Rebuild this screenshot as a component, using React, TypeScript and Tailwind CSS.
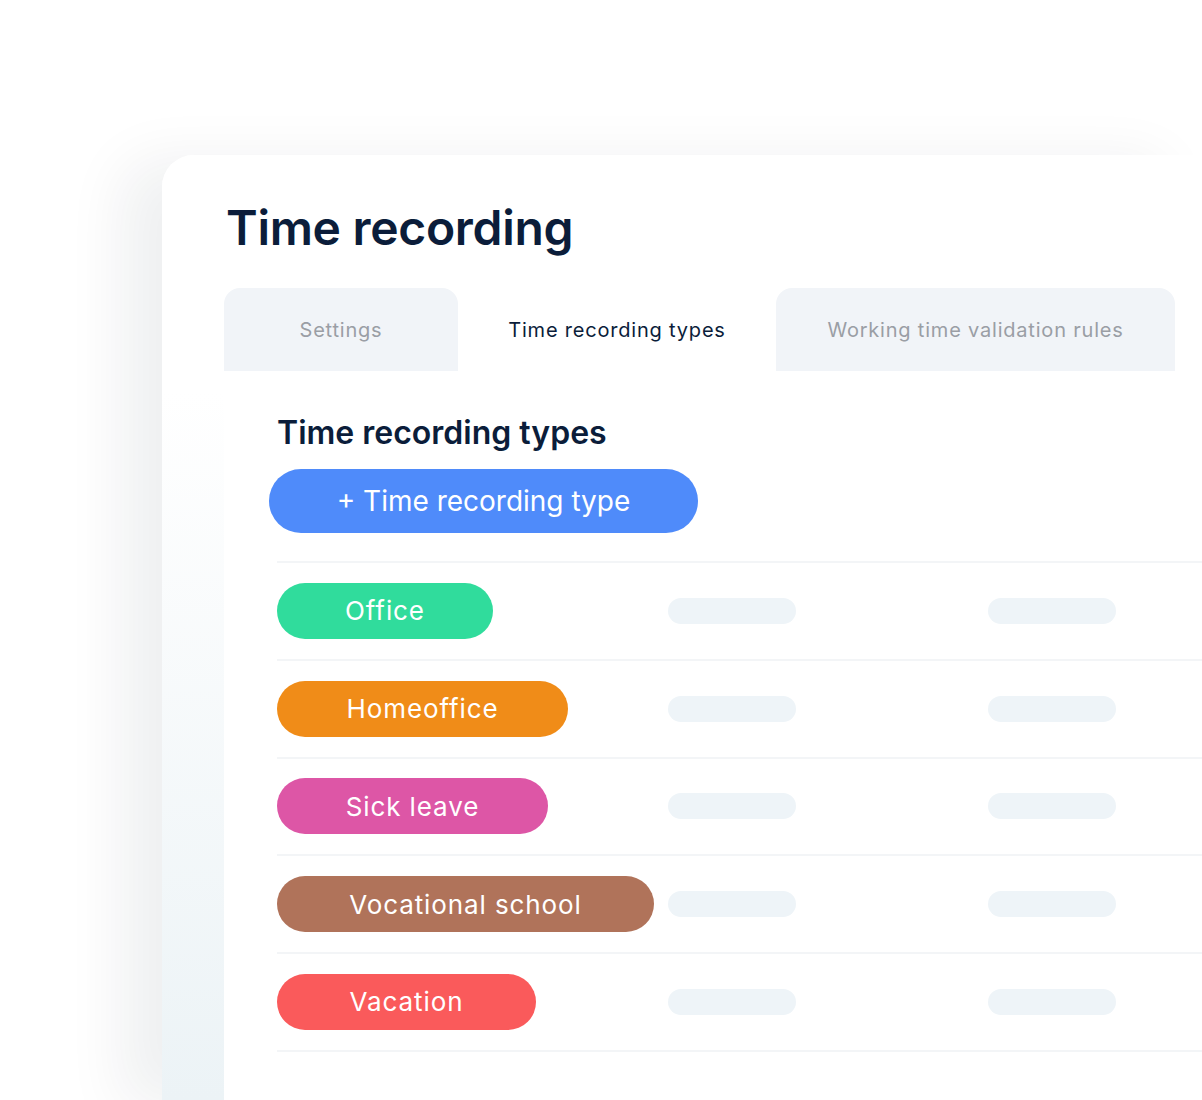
import React from "react";

const types = [
  { name: "Office", color: "bg-[#30dc9c]", width: "w-[216px]" },
  { name: "Homeoffice", color: "bg-[#f08c18]", width: "w-[291px]" },
  { name: "Sick leave", color: "bg-[#dd56a6]", width: "w-[271px]" },
  { name: "Vocational school", color: "bg-[#b0735a]", width: "w-[377px]" },
  { name: "Vacation", color: "bg-[#fa5a5b]", width: "w-[259px]" },
];

const App = () => {
  return (
    <div className="w-[1202px] h-[1100px] overflow-hidden bg-white flex pt-[155px] pl-[162px] font-['Inter',sans-serif]">
      <div className="flex-1 min-w-0 flex flex-col rounded-tl-[32px] bg-linear-to-b from-white from-25% to-[#ecf3f6] shadow-[-40px_6px_60px_rgba(20,30,50,0.065)] pl-[62px] pt-[43px]">
        <h1 className="ml-[2px] text-[48px] leading-[60px] font-semibold text-[#0b1d3a] tracking-[-0.3px]">
          Time recording
        </h1>

        <div className="flex mt-[30px] h-[83px]">
          <div className="w-[234px] rounded-t-[16px] bg-[#f1f4f8] flex items-center justify-center text-[20px] tracking-[0.8px] text-[#9a9ea5]">
            Settings
          </div>
          <div className="w-[318px] bg-white flex items-center justify-center text-[20px] tracking-[0.8px] text-[#0b1d3a]">
            Time recording types
          </div>
          <div className="w-[399px] rounded-t-[16px] bg-[#f1f4f8] flex items-center justify-center text-[20px] tracking-[0.8px] text-[#9a9ea5]">
            Working time validation rules
          </div>
        </div>

        <div className="flex-1 bg-white pl-[53px] pt-[42px]">
          <h2 className="text-[32px] leading-[40px] font-semibold text-[#0b1d3a]">
            Time recording types
          </h2>
          <button
            type="button"
            className="-ml-[8px] mt-[16px] w-[429px] h-[64px] rounded-full bg-[#4f8bfa] text-white text-[28px] flex items-center justify-center"
          >
            + Time recording type
          </button>

          <div className="mt-[28px] h-[2px] bg-[#f3f5f7]" />

          {types.map((t) => (
            <div
              key={t.name}
              className="flex items-center h-[97.75px] border-b-2 border-[#f3f5f7]"
            >
              <div className="w-[391px] shrink-0">
                <div
                  className={`${t.color} ${t.width} h-[56px] rounded-full flex items-center justify-center text-white text-[26px] tracking-[0.9px]`}
                >
                  {t.name}
                </div>
              </div>
              <div className="w-[128px] h-[26px] rounded-full bg-[#eef4f8] shrink-0" />
              <div className="ml-[192px] w-[128px] h-[26px] rounded-full bg-[#eef4f8] shrink-0" />
            </div>
          ))}
        </div>
      </div>
    </div>
  );
};

export default App;
